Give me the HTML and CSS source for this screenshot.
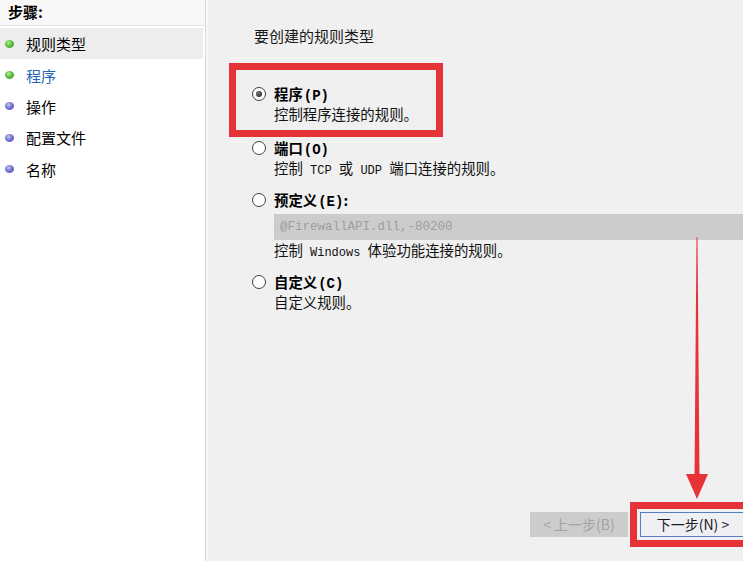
FILE: index.html
```html
<!DOCTYPE html>
<html lang="zh-CN">
<head>
<meta charset="utf-8">
<title>新建入站规则向导</title>
<link rel="stylesheet" href="styles.css">
</head>
<body>
<div class="app">
  <aside class="sidebar">
    <div class="steps-title">步骤:</div>
    <ul class="steps">
      <li class="step current"><span class="dot green"></span>规则类型</li>
      <li class="step active"><span class="dot green"></span>程序</li>
      <li class="step"><span class="dot blue"></span>操作</li>
      <li class="step"><span class="dot blue"></span>配置文件</li>
      <li class="step"><span class="dot blue"></span>名称</li>
    </ul>
  </aside>
  <main class="main">
    <div class="heading">要创建的规则类型</div>
    <div class="options">
      <div class="option first annotated">
        <span class="radio checked"></span>
        <div class="opt-title">程序<span class="lat">(P)</span></div>
        <div class="opt-desc">控制程序连接的规则。</div>
      </div>
      <div class="option">
        <span class="radio"></span>
        <div class="opt-title">端口<span class="lat">(O)</span></div>
        <div class="opt-desc">控制<span class="lat"> TCP </span>或<span class="lat"> UDP </span>端口连接的规则。</div>
      </div>
      <div class="option">
        <span class="radio"></span>
        <div class="opt-title">预定义<span class="lat">(E)</span>:</div>
        <div class="opt-input">@FirewallAPI.dll,-80200</div>
        <div class="opt-desc">控制<span class="lat"> Windows </span>体验功能连接的规则。</div>
      </div>
      <div class="option">
        <span class="radio"></span>
        <div class="opt-title">自定义<span class="lat">(C)</span></div>
        <div class="opt-desc">自定义规则。</div>
      </div>
    </div>
    <div class="footer">
      <button class="btn disabled">&lt; 上一步(B)</button>
      <button class="btn primary annotated-btn">下一步(N) &gt;</button>
    </div>
  </main>
  <svg class="arrow" width="30" height="270" viewBox="0 0 30 270" aria-hidden="true">
    <polygon points="16.5,0 17.5,0 19.5,240 14.5,240" fill="#e63338"/>
    <polygon points="6,237 28,237 17,262" fill="#e63338"/>
  </svg>
</div>
</body>
</html>
```
FILE: styles.css
```css
* { box-sizing: border-box; }
html, body { margin: 0; padding: 0; }
body {
  width: 743px;
  height: 561px;
  overflow: hidden;
  background: #f0f0f0;
  font-family: "Noto Sans CJK SC", "Noto Sans", sans-serif;
  color: #111;
}
.app {
  position: relative;
  display: flex;
  width: 743px;
  height: 561px;
}
.sidebar {
  width: 206px;
  flex: none;
  background: #ffffff;
  border-right: 1px solid #d9d9d9;
}
.steps-title {
  height: 26px;
  line-height: 24px;
  padding-left: 8px;
  font-size: 15px;
  font-weight: 700;
  background: #f8f8f8;
  border-bottom: 1px solid #e4e4e4;
  color: #000;
}
.steps {
  list-style: none;
  margin: 2px 0 0;
  padding: 0;
}
.step {
  display: flex;
  align-items: center;
  width: 203px;
  height: 31.4px;
  font-size: 15px;
  color: #000;
}
.step.current { background: #ededed; }
.step.active { color: #2466b5; }
.dot {
  width: 9px;
  height: 8px;
  border-radius: 50%;
  margin: 0 12px 0 5px;
  flex: none;
}
.dot.green { background: radial-gradient(circle at 40% 35%, #b6ec9e 0%, #5cbd3c 45%, #2f8a1f 100%); }
.dot.blue { background: radial-gradient(circle at 40% 35%, #c6c6f4 0%, #7373d2 45%, #4646a8 100%); }

.main {
  flex: 1;
  display: flex;
  flex-direction: column;
  overflow: hidden;
  border-left: 2px solid #f7f7f7;
  padding-top: 26px;
}
.heading {
  padding-left: 46px;
  font-size: 15px;
  line-height: 20px;
  color: #1a1a1a;
}
.options {
  margin-top: 24px;
  margin-left: 28px;
}
.option {
  display: grid;
  grid-template-columns: 14px auto;
  grid-auto-rows: auto;
  column-gap: 8px;
  padding-left: 16px;
  margin-top: 12px;
}
.option:nth-child(2) { margin-top: 8px; }
.option.first {
  width: 200px;
  padding-top: 14px;
  padding-bottom: 6px;
  margin-top: 0;
}
.annotated { outline: 7px solid #e63338; }
.radio {
  grid-column: 1;
  grid-row: 1;
  align-self: center;
  width: 14px;
  height: 14px;
  border-radius: 50%;
  border: 1px solid #404040;
  background: #fff;
  position: relative;
}
.radio.checked::after {
  content: "";
  position: absolute;
  left: 3px;
  top: 3px;
  width: 6px;
  height: 6px;
  border-radius: 50%;
  background: radial-gradient(circle at 40% 40%, #777 0%, #333 70%);
}
.opt-title {
  grid-column: 2;
  grid-row: 1;
  height: 20px;
  font-size: 14.4px;
  line-height: 20px;
  font-weight: 700;
  color: #000;
  white-space: nowrap;
}
.opt-title .lat {
  font-size: 14px;
  margin-left: 1px;
}
.opt-desc {
  grid-column: 2;
  height: 20px;
  font-size: 14.4px;
  line-height: 20px;
  color: #111;
  white-space: pre;
}
.lat {
  font-family: "Liberation Mono", "DejaVu Sans Mono", monospace;
  font-size: 12px;
  line-height: 1;
}
.opt-input {
  grid-column: 2;
  margin-top: 4px;
  width: 480px;
  height: 26px;
  line-height: 26px;
  padding-left: 6px;
  background: #cccccc;
  color: #9d9d9d;
  font-family: "Liberation Mono", "DejaVu Sans Mono", monospace;
  font-size: 12.5px;
  white-space: nowrap;
}
.footer {
  margin-top: auto;
  display: flex;
  justify-content: flex-end;
  gap: 12px;
  padding-bottom: 24px;
  margin-right: -3px;
}
.btn {
  height: 25px;
  font-family: "Noto Sans CJK SC", "Noto Sans", sans-serif;
  font-size: 14px;
  line-height: 23px;
  padding: 0;
  border-radius: 0;
}
.btn.disabled {
  width: 98px;
  background: #cccccc;
  border: 1px solid #cccccc;
  color: #a3a3a3;
}
.btn.primary {
  width: 106px;
  background: #eef0f4;
  border: 1px solid #5a7cc6;
  color: #1a1a1a;
}
.annotated-btn {
  outline: 7px solid #e63338;
  outline-offset: 3px;
}
.arrow {
  position: absolute;
  left: 680px;
  top: 237px;
}
```
